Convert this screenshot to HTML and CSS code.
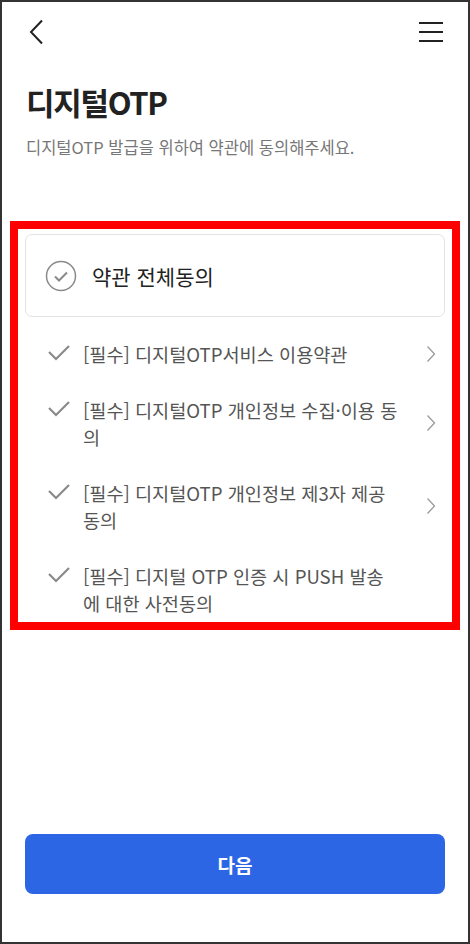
FILE: index.html
```html
<!DOCTYPE html>
<html lang="ko">
<head>
    <meta charset="UTF-8">
    <meta name="viewport" content="width=device-width, initial-scale=1.0">
    <title>디지털OTP</title>
    <link rel="stylesheet" href="styles.css">
</head>
<body>

    <div class="screen">
        <div class="top-bar">
            <!-- 뒤로가기 -->
            <svg class="back-icon" width="16" height="26" viewBox="0 0 16 26">
                <polyline points="14,1.5 3,13 14,24.5" fill="none" stroke="#222" stroke-width="2"/>
            </svg>
            <!-- 전체메뉴 -->
            <svg class="menu-icon" width="26" height="20" viewBox="0 0 26 20">
                <line x1="1" y1="1" x2="25" y2="1" stroke="#222" stroke-width="2"/>
                <line x1="1" y1="10" x2="25" y2="10" stroke="#222" stroke-width="2"/>
                <line x1="1" y1="19" x2="25" y2="19" stroke="#222" stroke-width="2"/>
            </svg>
        </div>

        <h1 class="page-title">디지털OTP</h1>
        <p class="page-desc">디지털OTP 발급을 위하여 약관에 동의해주세요.</p>

        <div class="terms-box">
            <div class="agree-all">
                <svg class="circle-check" width="32" height="32" viewBox="0 0 32 32">
                    <circle cx="16" cy="16" r="14.5" fill="none" stroke="#8a8a8a" stroke-width="1.5"/>
                    <polyline points="10,16.5 14,20.5 22,12.5" fill="none" stroke="#8a8a8a" stroke-width="2"/>
                </svg>
                <span>약관 전체동의</span>
            </div>

            <ul class="terms-list">
                <li class="term">
                    <svg class="check" width="24" height="18" viewBox="0 0 24 18">
                        <polyline points="2,8 9,15 22,2" fill="none" stroke="#8a8a8a" stroke-width="2.2"/>
                    </svg>
                    <span class="term-text">[필수] 디지털OTP서비스 이용약관</span>
                    <svg class="arrow" width="10" height="18" viewBox="0 0 10 18">
                        <polyline points="1.5,1.5 8.5,9 1.5,16.5" fill="none" stroke="#9a9a9a" stroke-width="1.3"/>
                    </svg>
                </li>
                <li class="term">
                    <svg class="check" width="24" height="18" viewBox="0 0 24 18">
                        <polyline points="2,8 9,15 22,2" fill="none" stroke="#8a8a8a" stroke-width="2.2"/>
                    </svg>
                    <span class="term-text">[필수] 디지털OTP 개인정보 수집·이용 동<br>의</span>
                    <svg class="arrow" width="10" height="18" viewBox="0 0 10 18">
                        <polyline points="1.5,1.5 8.5,9 1.5,16.5" fill="none" stroke="#9a9a9a" stroke-width="1.3"/>
                    </svg>
                </li>
                <li class="term">
                    <svg class="check" width="24" height="18" viewBox="0 0 24 18">
                        <polyline points="2,8 9,15 22,2" fill="none" stroke="#8a8a8a" stroke-width="2.2"/>
                    </svg>
                    <span class="term-text">[필수] 디지털OTP 개인정보 제3자 제공<br>동의</span>
                    <svg class="arrow" width="10" height="18" viewBox="0 0 10 18">
                        <polyline points="1.5,1.5 8.5,9 1.5,16.5" fill="none" stroke="#9a9a9a" stroke-width="1.3"/>
                    </svg>
                </li>
                <li class="term">
                    <svg class="check" width="24" height="18" viewBox="0 0 24 18">
                        <polyline points="2,8 9,15 22,2" fill="none" stroke="#8a8a8a" stroke-width="2.2"/>
                    </svg>
                    <span class="term-text">[필수] 디지털 OTP 인증 시 PUSH 발송<br>에 대한 사전동의</span>
                </li>
            </ul>
        </div>

        <button class="next-btn">다음</button>
    </div>

</body>
</html>
```

FILE: styles.css
```css
* {
    box-sizing: border-box;
}
body {
    margin: 0;
    font-family: "Noto Sans CJK KR", "Noto Sans", sans-serif;
    background: #fff;
}
.screen {
    width: 470px;
    height: 944px;
    border: 2px solid #333;
    display: flex;
    flex-direction: column;
}
.top-bar {
    height: 60px;
    display: flex;
    align-items: center;
    justify-content: space-between;
    padding: 0 24px 0 26px;
}
.page-title {
    margin: 20px 0 0 24px;
    font-size: 31px;
    line-height: 40px;
    font-weight: 700;
    letter-spacing: -1.3px;
    color: #222;
}
.page-desc {
    margin: 14px 0 0 24px;
    font-size: 16.5px;
    line-height: 22px;
    color: #777;
}
.terms-box {
    margin: 63px 8px 0 8px;
    border: 8px solid #f00;
    padding: 5px 7px 4px 7px;
}
.agree-all {
    height: 83px;
    border: 1px solid #e3e3e3;
    border-radius: 7px;
    display: flex;
    align-items: center;
    padding-left: 19px;
    gap: 15px;
    font-size: 21px;
    color: #222;
}
.terms-list {
    list-style: none;
    margin: 8px 0 0 0;
    padding: 0;
}
.term {
    display: flex;
    align-items: flex-start;
    padding: 15px 0 14px 0;
    font-size: 18.6px;
    line-height: 27px;
    color: #555;
}
.term:last-child {
    padding-bottom: 2px;
}
.check {
    flex: none;
    margin: 4px 0 0 22px;
}
.term-text {
    flex: 1;
    margin-left: 12px;
}
.arrow {
    flex: none;
    align-self: center;
    margin-right: 9px;
}
.next-btn {
    margin: auto 23px 48px 23px;
    height: 60px;
    border: none;
    border-radius: 8px;
    background: #2c66e4;
    color: #fff;
    font-family: inherit;
    font-size: 19px;
    font-weight: 700;
}
```
